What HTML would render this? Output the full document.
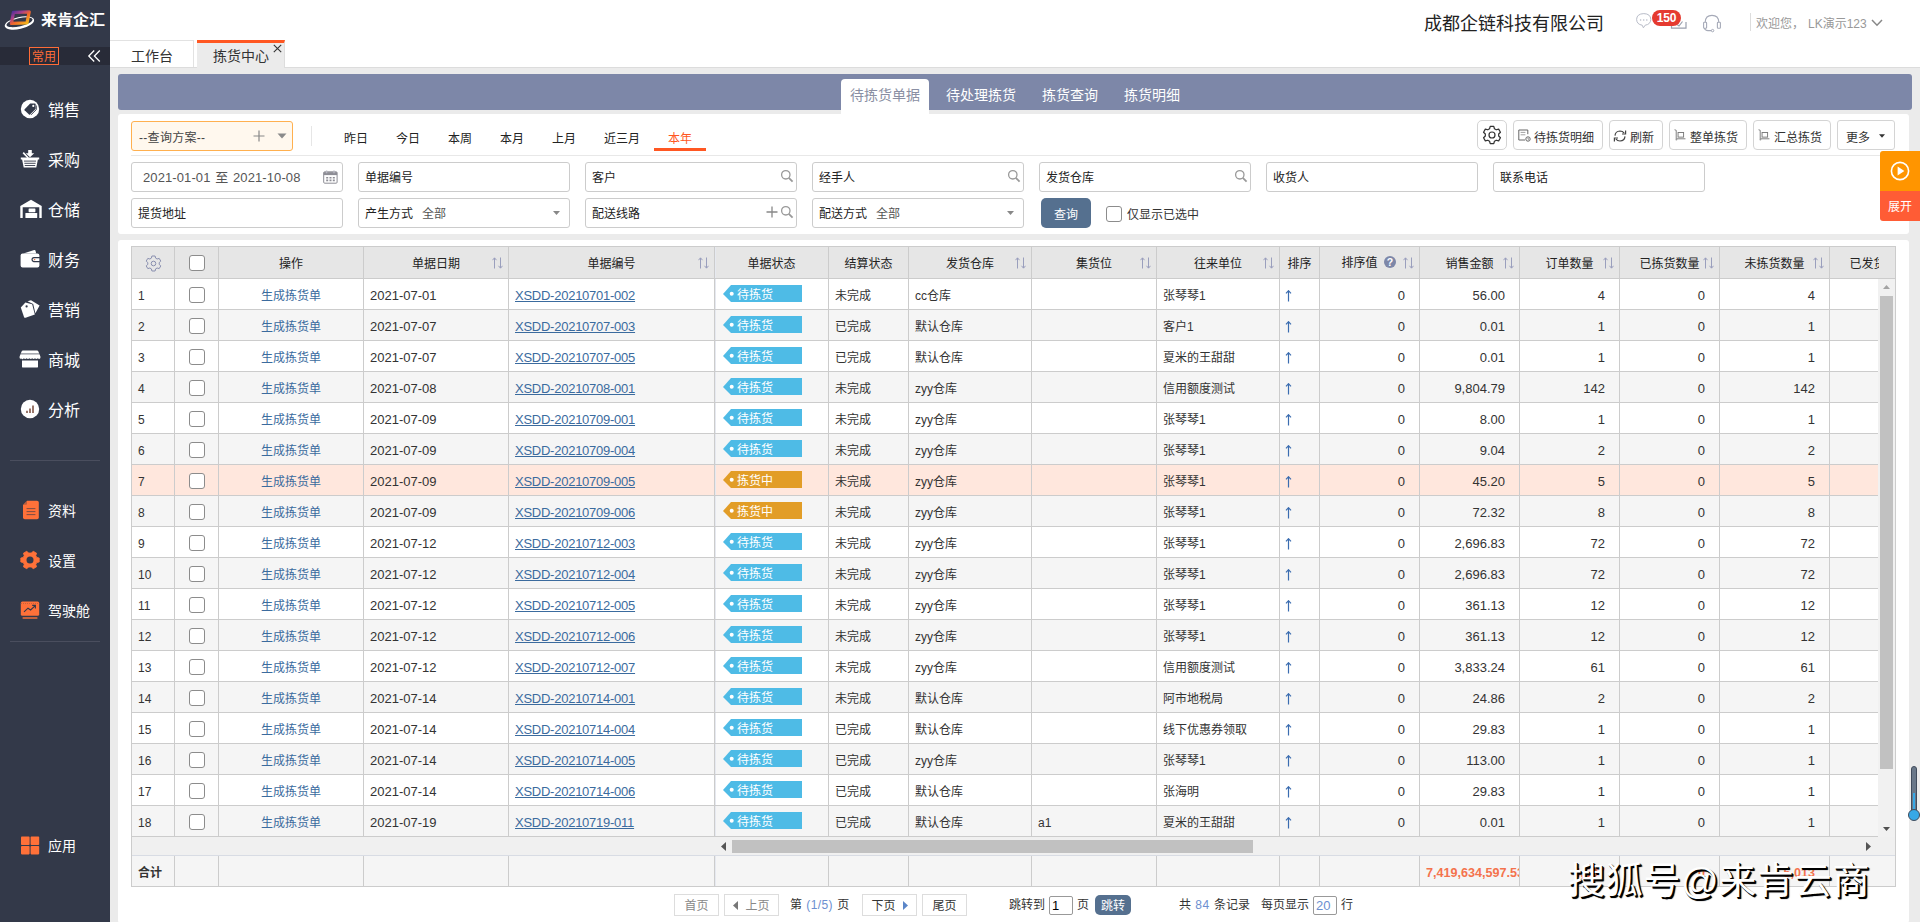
<!DOCTYPE html>
<html lang="zh-CN">
<head>
<meta charset="utf-8">
<title>拣货中心</title>
<style>
*{box-sizing:border-box;margin:0;padding:0}
html,body{width:1920px;height:922px;overflow:hidden;background:#ebebeb;font-family:"Liberation Sans","Noto Sans CJK SC",sans-serif;font-size:12px;color:#333}
body{position:relative}
.abs{position:absolute}
svg{display:block}
/* sidebar */
#side{position:absolute;left:0;top:0;width:110px;height:922px;background:#333949;color:#fff}
#side .band{position:absolute;left:0;top:47px;width:110px;height:18px;background:#282b38}
#side .cy{position:absolute;left:29px;top:47px;width:30px;height:18px;border:1px solid #ff6c37;color:#ff6c37;font-size:12px;line-height:18px;text-align:center;white-space:nowrap;overflow:hidden}
#side .mi{position:absolute;left:48px;font-size:16px;line-height:23px;height:20px;color:#fff;white-space:nowrap}
#side .mi.s{font-size:14px}
#side .ic{position:absolute;left:20px;width:20px;height:20px}
#side .hr{position:absolute;left:10px;width:90px;height:1px;background:#4a4e5e}
/* header */
#head{position:absolute;left:110px;top:0;width:1810px;height:68px;background:#fff;border-bottom:1px solid #dcdcdc}
.tab{position:absolute;top:40px;height:27px;font-size:14px;line-height:31px;color:#333;text-align:center;white-space:nowrap}
.tab1{left:0;width:84px;padding-left:1px;border:1px solid #e2e2e2;border-left:none;border-bottom:none;background:#fff}
.tab2{left:87px;width:88px;height:28px;background:#ebebeb;border-top:3px solid #ff5722;line-height:26px;border-right:1px solid #ddd;text-align:left;padding-left:16px}
.company{position:absolute;left:1314px;top:11px;font-size:18px;line-height:26px;color:#222;white-space:nowrap}
.welcome{position:absolute;top:16px;font-size:12px;line-height:16px;color:#999;white-space:nowrap}
/* purple bar */
#pbar{position:absolute;left:118px;top:74px;width:1794px;height:36px;background:#7d87a8;border-radius:3px}
#pbar .st{position:absolute;top:5px;height:31px;line-height:33px;font-size:14px;color:#fff;white-space:nowrap}
#pbar .st.on{background:#fff;color:#8a8fa3;border-radius:4px 4px 0 0;width:88px;height:36px;text-align:center}
/* panels */
.panel{position:absolute;left:118px;width:1791px;background:#fff;border-radius:3px}
.inp{position:absolute;width:212px;height:30px;border:1px solid #ccc;border-radius:3px;background:#fff;font-size:12px;line-height:30px;padding-left:6px;color:#222;white-space:nowrap;overflow:hidden}
.inp .v{color:#555;margin-left:9px}
.btn{position:absolute;top:120px;height:30px;border:1px solid #d4d4d4;border-radius:4px;background:#fff;font-size:12px;line-height:35px;color:#333;white-space:nowrap;overflow:hidden}
.qd{position:absolute;top:131px;font-size:12px;line-height:16px;color:#222;white-space:nowrap}
/* table */
#grid{position:absolute;left:131px;top:246px;width:1765px;height:641px;border:1px solid #ccc;overflow:hidden;background:#fff}
.row{position:absolute;left:0;height:31px;width:1746px;border-bottom:1px solid #ccc;white-space:nowrap;overflow:hidden;display:flex}
.row.hd{top:0;height:32px;background:#e6e6e6;border-bottom:1px solid #ccc;width:1747px}
.row.ev{background:#f5f5f5}
.row.sel{background:#ffe7dd}
.c{flex:none;height:30px;border-right:1px solid #ccc;line-height:34px;font-size:12px;padding:0 6px;overflow:hidden;white-space:nowrap;position:relative;color:#333}
.hd .c{text-align:center;color:#222;border-right-color:#ccc;padding:0;height:31px;line-height:34px}
.w1{width:43px}.w2{width:44px}.w3{width:145px}.w4{width:145px}.w5{width:206px}.w6{width:114px;box-shadow:inset 1px 0 0 #e6e9f0}.w7{width:80px}.w8{width:123px}.w9{width:125px}.w10{width:123px}.w11{width:40px}.w12{width:100px}.w13{width:100px}.w14{width:100px}.w15{width:100px}.w16{width:110px}.w17{width:100px}
.ctr{text-align:center}
.num{text-align:right;padding-right:14px;font-size:13px}
.dt{font-size:13px}
.lk{color:#3b6b9e}
.lnk{color:#3b6b9e;text-decoration:underline;font-size:13px;letter-spacing:-0.25px}
.cb{position:absolute;left:14px;top:8px;width:16px;height:16px;border:1px solid #8c8c8c;border-radius:3px;background:#fff}
.tag{position:absolute;left:8px;top:6px;width:79px;height:17px;color:#fff;font-size:12px;line-height:20px;overflow:hidden}
.tag svg{position:absolute;left:0;top:0}
.tag span{position:absolute;left:14px;top:0}
.srt{position:absolute;right:5px;top:10px}
.tot{color:#f4734d;font-weight:bold;font-size:12.6px}
.up{color:#3b6b9e}
/* pager */
.pg{position:absolute;top:894px;height:22px;line-height:22px;overflow:hidden;font-size:12px;white-space:nowrap;color:#333}
.pgb{border:1px solid #ddd;text-align:center;background:#fff}
</style>
</head>
<body>
<div id="side">
  <svg class="abs" style="left:0px;top:4px" width="40" height="32" viewBox="0 4 40 32">
    <defs><linearGradient id="lg1" x1="0" y1="0" x2="1" y2="1"><stop offset="0" stop-color="#4b2f9a"/><stop offset="0.3" stop-color="#a8408c"/><stop offset="0.55" stop-color="#f0652e"/><stop offset="0.8" stop-color="#f59a1f"/><stop offset="1" stop-color="#f2c21c"/></linearGradient></defs>
    <g transform="rotate(-13 19.4 23)"><path d="M4.4 23 A15 6 0 1 0 34.4 23 A15 6 0 1 0 4.4 23 Z M6.4 22.3 A13.3 4 0 1 1 33 22.3 A13.3 4 0 1 1 6.4 22.3 Z" fill="#fff" fill-rule="evenodd"/></g>
    <path d="M13.4 12.4 L29.2 11.8 L27 22.8 L11.4 23.4 Z" fill="none" stroke="url(#lg1)" stroke-width="3.3" stroke-linejoin="round"/>
  </svg>
  <div class="abs" style="left:41px;top:9px;font-size:16px;line-height:22px;font-weight:bold;color:#fff;letter-spacing:0;white-space:nowrap;transform:scale(1.0,0.94);transform-origin:left bottom">来肯企汇</div>
  <div class="band"></div>
  <div class="cy">常用</div>
  <svg class="abs" style="left:87px;top:49px" width="16" height="14" viewBox="0 0 16 14"><path d="M7.2 1.5 L1.8 7 L7.2 12.5 M12.8 1.5 L7.4 7 L12.8 12.5" fill="none" stroke="#fff" stroke-width="1.3"/></svg>

  <!-- 销售 -->
  <svg class="ic" style="top:99px" viewBox="0 0 20 20"><circle cx="10" cy="10" r="9.2" fill="#fff"/><path d="M10.2 4.6 L15 4.6 Q15.6 4.6 15.6 5.2 L15.6 10 L10 15.6 Q9.5 16 9 15.6 L4.6 11.2 Q4.2 10.7 4.6 10.2 Z" fill="#333949"/><circle cx="13.3" cy="6.9" r="1.1" fill="#fff"/><path d="M16.3 6.5 L16.3 10.6 L11 15.9" fill="none" stroke="#333949" stroke-width="0.9"/></svg>
  <div class="mi" style="top:99px">销售</div>
  <!-- 采购 -->
  <svg class="ic" style="top:149px" viewBox="0 0 20 20"><path d="M8.2 1 H11.8 V4.2 H14.2 L10 8.2 L5.8 4.2 H8.2 Z" fill="#fff"/><path d="M0.8 8.6 H19.2 V10.6 H17.9 L16.3 18.6 H3.7 L2.1 10.6 H0.8 Z" fill="#fff"/><path d="M4 12.1 H16 M4.4 14.3 H15.6 M4.8 16.5 H15.2" stroke="#333949" stroke-width="0.9"/><path d="M3.2 3.6 L8.2 9" stroke="#fff" stroke-width="1.6"/></svg>
  <div class="mi" style="top:149px">采购</div>
  <!-- 仓储 -->
  <svg class="ic" style="top:199px;width:22px" viewBox="0 0 22 20"><path d="M0.3 7 L11 0.8 L21.7 7 V19 H19.3 V8.2 H2.7 V19 H0.3 Z" fill="#fff"/><rect x="8.6" y="9.4" width="6.8" height="3.8" rx="0.6" fill="#fff"/><rect x="5.4" y="14" width="11.8" height="5" rx="0.6" fill="#fff"/></svg>
  <div class="mi" style="top:199px">仓储</div>
  <!-- 财务 -->
  <svg class="ic" style="top:249px" viewBox="0 0 20 20"><path d="M3.4 4.6 L14.2 1 Q15.2 0.8 15.5 1.8 L16.2 4.6 Z" fill="#fff"/><path d="M2.6 4.4 H17.4 Q19.4 4.4 19.4 6.4 V8 H13.6 Q11.4 8.2 11.4 10.6 Q11.4 13 13.6 13.2 H19.4 V16.6 Q19.4 18.6 17.4 18.6 H2.6 Q0.6 18.6 0.6 16.6 V6.4 Q0.6 4.4 2.6 4.4 Z" fill="#fff"/><path d="M14 9.2 H19.4 V12 H14 Q12.7 11.9 12.7 10.6 Q12.7 9.3 14 9.2 Z" fill="#fff"/><circle cx="14.6" cy="10.6" r="0.8" fill="#e8764a"/></svg>
  <div class="mi" style="top:249px">财务</div>
  <!-- 营销 -->
  <svg class="ic" style="top:299px" viewBox="0 0 20 20"><path d="M7.5 2.2 L11 1.2 L19.6 6.4 L15.4 14.2 L13.2 5 Z" fill="#fff"/><path d="M0.8 8.4 L5.4 3.6 L12.2 5.2 L14.8 15.6 L5.6 18.8 Q4.4 19.1 4 18 Z" fill="#fff"/><circle cx="6.6" cy="7.4" r="1.1" fill="#333949"/></svg>
  <div class="mi" style="top:299px">营销</div>
  <!-- 商城 -->
  <svg class="ic" style="top:349px;left:19px;width:22px" viewBox="0 0 22 20"><path d="M4 1.6 H18 Q19 1.6 19.4 2.6 L21.4 7.4 V9 Q20.4 10.6 18.8 9.3 Q17.4 10.8 16 9.3 Q14.6 10.8 13.2 9.3 Q11.8 10.8 10.4 9.3 Q9 10.8 7.6 9.3 Q6.2 10.8 4.8 9.3 Q3.4 10.8 2.4 9.6 Q1 10.2 0.6 9 V7.4 L2.6 2.6 Q3 1.6 4 1.6 Z" fill="#fff"/><path d="M3 11.6 H19 V17.4 Q19 18.6 17.8 18.6 H4.2 Q3 18.6 3 17.4 Z" fill="#fff"/><path d="M1.4 4.9 H20.6" stroke="#333949" stroke-width="0.7"/></svg>
  <div class="mi" style="top:349px">商城</div>
  <!-- 分析 -->
  <svg class="ic" style="top:399px" viewBox="0 0 20 20"><circle cx="10" cy="10" r="9.2" fill="#fff"/><path d="M7 11.8 V14 M10 9.6 V14 M13 6.6 V14" stroke="#7a4a3a" stroke-width="1.5"/></svg>
  <div class="mi" style="top:399px">分析</div>

  <div class="hr" style="top:460px"></div>
  <!-- 资料 -->
  <svg class="ic" style="top:500px;left:22px;width:18px" viewBox="0 0 18 20"><path d="M5 0.8 H15 Q16.8 0.8 16.8 2.6 V17.4 Q16.8 19.2 15 19.2 H2.8 Q1 19.2 1 17.4 V4.8 Z" fill="#ff7139"/><path d="M1 4.8 L5 0.8 V3.8 Q5 4.8 4 4.8 Z" fill="#333949" opacity="0.35"/><path d="M4.6 8.6 H13.4 M4.6 11.6 H13.4 M4.6 14.6 H13.4" stroke="#333949" stroke-width="0.9" opacity="0.7"/></svg>
  <div class="mi s" style="top:500px">资料</div>
  <!-- 设置 -->
  <svg class="ic" style="top:550px" viewBox="0 0 20 20"><path d="M8 0.8 H12 L12.6 3.2 L14.4 4.2 L16.8 3.4 L18.8 6.8 L17 8.6 V11.4 L18.8 13.2 L16.8 16.6 L14.4 15.8 L12.6 16.8 L12 19.2 H8 L7.4 16.8 L5.6 15.8 L3.2 16.6 L1.2 13.2 L3 11.4 V8.6 L1.2 6.8 L3.2 3.4 L5.6 4.2 L7.4 3.2 Z" fill="#ff7139" stroke="#ff7139" stroke-width="0.8" stroke-linejoin="round" transform="rotate(90 10 10)"/><circle cx="10" cy="10" r="3.5" fill="#333949"/></svg>
  <div class="mi s" style="top:550px">设置</div>
  <!-- 驾驶舱 -->
  <svg class="ic" style="top:600px" viewBox="0 0 20 20"><rect x="0.8" y="1.6" width="18.4" height="14.2" rx="1.6" fill="#ff7139"/><path d="M2.6 18 H17.4" stroke="#ff7139" stroke-width="1.4"/><path d="M4 11.8 L8 8.2 L10.6 10 L15 5.8 M12.2 5.4 H15.4 V8.6" fill="none" stroke="#333949" stroke-width="1.1"/><path d="M1 3.4 H19" stroke="#333949" stroke-width="0.5" stroke-dasharray="1 1" opacity="0.6"/></svg>
  <div class="mi s" style="top:600px">驾驶舱</div>
  <div class="hr" style="top:641px"></div>
  <!-- 应用 -->
  <svg class="ic" style="top:835px" viewBox="0 0 20 20"><rect x="1" y="1.6" width="8.6" height="8.4" rx="0.8" fill="#ff7139"/><rect x="10.6" y="1.6" width="8.6" height="8.4" rx="0.8" fill="#ff7139"/><rect x="1" y="11" width="8.6" height="8.4" rx="0.8" fill="#ff7139"/><rect x="10.6" y="11" width="8.6" height="8.4" rx="0.8" fill="#ff7139"/></svg>
  <div class="mi s" style="top:835px">应用</div>
</div>
<div id="head">
  <div class="tab tab1">工作台</div>
  <div class="tab tab2">拣货中心</div>
  <svg class="abs" style="left:163px;top:44px" width="9" height="9" viewBox="0 0 9 9"><path d="M0.8 0.8 L8.2 8.2 M8.2 0.8 L0.8 8.2" stroke="#333" stroke-width="1.1"/></svg>
  <div class="company">成都企链科技有限公司</div>
  <!-- chat -->
  <svg class="abs" style="left:1525px;top:12px" width="18" height="18" viewBox="0 0 18 18"><path d="M8.8 1.6 Q15.6 1.8 15.8 7.4 Q15.6 12.4 10.2 13.2 L8.4 15.8 L7.2 13.2 Q1.8 12.4 1.6 7.4 Q1.8 1.8 8.8 1.6 Z" fill="none" stroke="#b8bcc8" stroke-width="1"/><circle cx="5.6" cy="8" r="0.8" fill="#b8bcc8"/><circle cx="8.7" cy="8" r="0.8" fill="#b8bcc8"/><circle cx="11.8" cy="8" r="0.8" fill="#b8bcc8"/></svg>
  <!-- tray -->
  <svg class="abs" style="left:1560px;top:14px" width="18" height="16" viewBox="0 0 18 16"><path d="M1.5 8 V14.2 H16 V8" fill="none" stroke="#9aa0ae" stroke-width="1.2"/><path d="M7 10.5 L9 12 L12.5 7.5" fill="none" stroke="#9aa0ae" stroke-width="1.2"/></svg>
  <div class="abs" style="left:1542px;top:10px;width:29px;height:16px;border-radius:8px;background:#e53a30;color:#fff;font-size:12px;font-weight:bold;line-height:17px;text-align:center;letter-spacing:-0.2px">150</div>
  <!-- headset -->
  <svg class="abs" style="left:1592px;top:14px" width="20" height="19" viewBox="0 0 20 19"><path d="M3.2 8.2 Q3.4 1.4 10 1.4 Q16.6 1.4 16.8 8.2" fill="none" stroke="#a6aab8" stroke-width="1.1"/><rect x="1.6" y="8.2" width="3" height="6" rx="0.8" fill="none" stroke="#a6aab8" stroke-width="1.1"/><rect x="15.4" y="8.2" width="3" height="6" rx="0.8" fill="none" stroke="#a6aab8" stroke-width="1.1"/><path d="M2.4 14.2 Q3 16.6 6 16.6 H9.4" fill="none" stroke="#a6aab8" stroke-width="1.1"/><circle cx="10.6" cy="16.6" r="1.2" fill="none" stroke="#a6aab8" stroke-width="1"/></svg>
  <div class="abs" style="left:1640px;top:13px;width:1px;height:18px;background:#ddd"></div>
  <div class="welcome" style="left:1646px">欢迎您，</div>
  <div class="welcome" style="left:1698px">LK演示123</div>
  <svg class="abs" style="left:1761px;top:19px" width="12" height="8" viewBox="0 0 12 8"><path d="M1 1 L6 6.2 L11 1" fill="none" stroke="#888" stroke-width="1.5"/></svg>
</div>

<div id="pbar">
  <div class="st on" style="left:723px">待拣货单据</div>
  <div class="st" style="left:828px">待处理拣货</div>
  <div class="st" style="left:924px">拣货查询</div>
  <div class="st" style="left:1006px">拣货明细</div>
</div>
<div class="panel" style="top:114px;height:120px"></div>
<!-- query scheme -->
<div class="abs" style="left:131px;top:121px;width:162px;height:30px;border:1px solid #ffb04f;border-radius:3px;background:#fff8ee;font-size:12px;line-height:33px;letter-spacing:0.3px;overflow:hidden;padding-left:7px;color:#444;white-space:nowrap">--查询方案--</div>
<svg class="abs" style="left:253px;top:130px" width="12" height="12" viewBox="0 0 12 12"><path d="M6 0.5 V11.5 M0.5 6 H11.5" stroke="#888" stroke-width="1.2"/></svg>
<svg class="abs" style="left:277px;top:133px" width="10" height="6" viewBox="0 0 10 6"><path d="M0.5 0.5 H9.5 L5 5.5 Z" fill="#8a8a8a"/></svg>
<div class="abs" style="left:311px;top:126px;width:1px;height:20px;background:#e6e6e6"></div>
<div class="qd" style="left:344px">昨日</div>
<div class="qd" style="left:396px">今日</div>
<div class="qd" style="left:448px">本周</div>
<div class="qd" style="left:500px">本月</div>
<div class="qd" style="left:552px">上月</div>
<div class="qd" style="left:604px">近三月</div>
<div class="qd" style="left:668px;color:#ff5722">本年</div>
<div class="abs" style="left:654px;top:148px;width:52px;height:3px;background:#ff5722"></div>
<div class="abs" style="left:131px;top:155px;width:1764px;height:1px;background:#e8e8e8"></div>

<!-- toolbar buttons -->
<div class="btn" style="left:1477px;width:30px;border-radius:5px"></div>
<svg class="abs" style="left:1482px;top:125px" width="20" height="20" viewBox="0 0 18 18"><path d="M7.4 1.2 H10.6 L11.2 3.4 L12.8 4.3 L15 3.7 L16.6 6.5 L15 8.1 V9.9 L16.6 11.5 L15 14.3 L12.8 13.7 L11.2 14.6 L10.6 16.8 H7.4 L6.8 14.6 L5.2 13.7 L3 14.3 L1.4 11.5 L3 9.9 V8.1 L1.4 6.5 L3 3.7 L5.2 4.3 L6.8 3.4 Z" fill="none" stroke="#333" stroke-width="1.1" stroke-linejoin="round"/><circle cx="9" cy="9" r="2.7" fill="none" stroke="#333" stroke-width="1.1"/></svg>
<div class="btn" style="left:1513px;width:90px;padding-left:20px">待拣货明细</div>
<svg class="abs" style="left:1518px;top:129px" width="13" height="13" viewBox="0 0 13 13"><path d="M9.8 5.2 V1 H0.8 V11 H7" fill="none" stroke="#666" stroke-width="1"/><path d="M2.6 3.4 H7.4 M2.6 5.8 H7.4" stroke="#999" stroke-width="0.9"/><circle cx="10" cy="10" r="2.2" fill="none" stroke="#666" stroke-width="1"/><path d="M10 8.8 V10.2 H11" stroke="#666" stroke-width="0.7" fill="none"/></svg>
<div class="btn" style="left:1609px;width:54px;padding-left:20px">刷新</div>
<svg class="abs" style="left:1613px;top:129px" width="14" height="14" viewBox="0 0 14 14"><path d="M2 6.6 Q2.4 2.2 7 2 Q9.6 2 11.2 4.2" fill="none" stroke="#444" stroke-width="1.2"/><path d="M12.6 1.4 V5 H9" fill="none" stroke="#444" stroke-width="1.2"/><path d="M12 7.4 Q11.6 11.8 7 12 Q4.4 12 2.8 9.8" fill="none" stroke="#444" stroke-width="1.2"/><path d="M1.4 12.6 V9 H5" fill="none" stroke="#444" stroke-width="1.2"/></svg>
<div class="btn" style="left:1669px;width:78px;padding-left:20px">整单拣货</div>
<svg class="abs" style="left:1674px;top:129px" width="12" height="12" viewBox="0 0 13 13"><path d="M0.6 0.8 L2.4 1.4 V10.6 H12.4" fill="none" stroke="#777" stroke-width="1"/><rect x="4.4" y="3.8" width="6" height="5" fill="none" stroke="#777" stroke-width="1"/><circle cx="2.6" cy="11.4" r="1" fill="#999"/></svg>
<div class="btn" style="left:1753px;width:78px;padding-left:20px">汇总拣货</div>
<svg class="abs" style="left:1758px;top:129px" width="12" height="12" viewBox="0 0 13 13"><path d="M0.6 0.8 L2.4 1.4 V10.6 H12.4" fill="none" stroke="#777" stroke-width="1"/><rect x="4.4" y="3.8" width="6" height="5" fill="none" stroke="#777" stroke-width="1"/><circle cx="2.6" cy="11.4" r="1" fill="#999"/></svg>
<div class="btn" style="left:1837px;width:58px;padding-left:8px;border-radius:3px">更多</div>
<svg class="abs" style="left:1879px;top:134px" width="6" height="4" viewBox="0 0 7 4"><path d="M0 0 H7 L3.5 4 Z" fill="#333"/></svg>

<!-- row 1 inputs -->
<div class="inp" style="left:131px;top:162px;padding-left:11px;color:#555;font-size:13px;word-spacing:1px;letter-spacing:0.1px">2021-01-01 至 2021-10-08</div>
<svg class="abs" style="left:323px;top:170px" width="15" height="14" viewBox="0 0 15 14"><rect x="0.7" y="1.8" width="13.4" height="11.4" rx="1" fill="none" stroke="#8d8d95" stroke-width="1"/><path d="M0.7 3.6 H14.1" stroke="#8d8d95" stroke-width="3"/><path d="M3.6 0.4 V3.2 M11 0.4 V3.2" stroke="#b9b9c4" stroke-width="1.4"/><path d="M3.2 7.8 H5.2 M6.5 7.8 H8.5 M9.8 7.8 H11.8 M3.2 10.4 H5.2 M6.5 10.4 H8.5 M9.8 10.4 H11.8" stroke="#8d8d95" stroke-width="1.6"/></svg>
<div class="inp" style="left:358px;top:162px">单据编号</div>
<div class="inp" style="left:585px;top:162px">客户</div>
<div class="inp" style="left:812px;top:162px">经手人</div>
<div class="inp" style="left:1039px;top:162px">发货仓库</div>
<div class="inp" style="left:1266px;top:162px">收货人</div>
<div class="inp" style="left:1493px;top:162px">联系电话</div>
<svg class="abs sr" style="left:780px;top:169px" width="14" height="14" viewBox="0 0 14 14"><circle cx="5.8" cy="5.8" r="4.2" fill="none" stroke="#999" stroke-width="1.3"/><path d="M8.8 8.8 L12.6 12.6" stroke="#999" stroke-width="1.8"/></svg>
<svg class="abs sr" style="left:1007px;top:169px" width="14" height="14" viewBox="0 0 14 14"><circle cx="5.8" cy="5.8" r="4.2" fill="none" stroke="#999" stroke-width="1.3"/><path d="M8.8 8.8 L12.6 12.6" stroke="#999" stroke-width="1.8"/></svg>
<svg class="abs sr" style="left:1234px;top:169px" width="14" height="14" viewBox="0 0 14 14"><circle cx="5.8" cy="5.8" r="4.2" fill="none" stroke="#999" stroke-width="1.3"/><path d="M8.8 8.8 L12.6 12.6" stroke="#999" stroke-width="1.8"/></svg>
<!-- row 2 inputs -->
<div class="inp" style="left:131px;top:198px">提货地址</div>
<div class="inp" style="left:358px;top:198px">产生方式<span class="v">全部</span></div>
<svg class="abs" style="left:553px;top:211px" width="7" height="4" viewBox="0 0 7 4"><path d="M0 0 H7 L3.5 4 Z" fill="#888"/></svg>
<div class="inp" style="left:585px;top:198px">配送线路</div>
<svg class="abs" style="left:766px;top:206px" width="12" height="12" viewBox="0 0 12 12"><path d="M6 0.5 V11.5 M0.5 6 H11.5" stroke="#888" stroke-width="1.3"/></svg>
<svg class="abs sr" style="left:780px;top:205px" width="14" height="14" viewBox="0 0 14 14"><circle cx="5.8" cy="5.8" r="4.2" fill="none" stroke="#999" stroke-width="1.3"/><path d="M8.8 8.8 L12.6 12.6" stroke="#999" stroke-width="1.8"/></svg>
<div class="inp" style="left:812px;top:198px">配送方式<span class="v">全部</span></div>
<svg class="abs" style="left:1007px;top:211px" width="7" height="4" viewBox="0 0 7 4"><path d="M0 0 H7 L3.5 4 Z" fill="#888"/></svg>
<div class="abs" style="left:1041px;top:198px;width:50px;height:30px;border-radius:5px;background:#55708f;color:#fff;font-size:12px;line-height:34px;overflow:hidden;text-align:center">查询</div>
<div class="abs" style="left:1106px;top:206px;width:16px;height:16px;border:1px solid #8c8c8c;border-radius:3px;background:#fff"></div>
<div class="abs" style="left:1127px;top:206px;font-size:12px;line-height:19px;color:#333;white-space:nowrap">仅显示已选中</div>

<!-- float button -->
<div class="abs" style="left:1880px;top:151px;width:40px;height:40px;background:#ff9500;border-radius:3px 0 0 0"></div>
<svg class="abs" style="left:1890px;top:161px" width="20" height="20" viewBox="0 0 20 20"><circle cx="10" cy="10" r="8.6" fill="none" stroke="#fff" stroke-width="1.6"/><path d="M7.6 5.6 L14.4 10 L7.6 14.4 Z" fill="#fff"/></svg>
<div class="abs" style="left:1880px;top:191px;width:40px;height:30px;background:#ff5c35;border-radius:0 0 0 3px;color:#fff;font-size:12px;line-height:33px;overflow:hidden;text-align:center">展开</div>
<div class="panel" style="top:240px;height:683px"></div>
<div id="grid">
<div class="abs" style="left:0;top:0;width:1763px;height:32px;background:#e6e6e6;border-bottom:1px solid #ccc"></div>
<div class="row hd">
<div class="c w1"><svg class="abs" style="left:13px;top:8px" width="17" height="17" viewBox="0 0 17 17"><path d="M6.9 1 H10.1 L10.6 3.1 L12.1 4 L14.2 3.4 L15.8 6.1 L14.2 7.6 V9.4 L15.8 10.9 L14.2 13.6 L12.1 13 L10.6 13.9 L10.1 16 H6.9 L6.4 13.9 L4.9 13 L2.8 13.6 L1.2 10.9 L2.8 9.4 V7.6 L1.2 6.1 L2.8 3.4 L4.9 4 L6.4 3.1 Z" fill="none" stroke="#8a90b0" stroke-width="1" stroke-linejoin="round"/><circle cx="8.5" cy="8.5" r="2.3" fill="none" stroke="#8a90b0" stroke-width="1"/></svg></div>
<div class="c w2"><i class="cb" style="left:14px;top:8px"></i></div>
<div class="c w3">操作</div>
<div class="c w4">单据日期<svg class="srt" width="11" height="12" viewBox="0 0 11 12"><path d="M2.5 11.5 V1 M0.5 3.2 L2.5 0.8 L4.5 3.2 M8.5 0.5 V11 M6.5 8.8 L8.5 11.2 L10.5 8.8" fill="none" stroke="#9a9fbd" stroke-width="1"/></svg></div>
<div class="c w5">单据编号<svg class="srt" width="11" height="12" viewBox="0 0 11 12"><path d="M2.5 11.5 V1 M0.5 3.2 L2.5 0.8 L4.5 3.2 M8.5 0.5 V11 M6.5 8.8 L8.5 11.2 L10.5 8.8" fill="none" stroke="#9a9fbd" stroke-width="1"/></svg></div>
<div class="c w6">单据状态</div>
<div class="c w7">结算状态</div>
<div class="c w8">发货仓库<svg class="srt" width="11" height="12" viewBox="0 0 11 12"><path d="M2.5 11.5 V1 M0.5 3.2 L2.5 0.8 L4.5 3.2 M8.5 0.5 V11 M6.5 8.8 L8.5 11.2 L10.5 8.8" fill="none" stroke="#9a9fbd" stroke-width="1"/></svg></div>
<div class="c w9">集货位<svg class="srt" width="11" height="12" viewBox="0 0 11 12"><path d="M2.5 11.5 V1 M0.5 3.2 L2.5 0.8 L4.5 3.2 M8.5 0.5 V11 M6.5 8.8 L8.5 11.2 L10.5 8.8" fill="none" stroke="#9a9fbd" stroke-width="1"/></svg></div>
<div class="c w10">往来单位<svg class="srt" width="11" height="12" viewBox="0 0 11 12"><path d="M2.5 11.5 V1 M0.5 3.2 L2.5 0.8 L4.5 3.2 M8.5 0.5 V11 M6.5 8.8 L8.5 11.2 L10.5 8.8" fill="none" stroke="#9a9fbd" stroke-width="1"/></svg></div>
<div class="c w11">排序</div>
<div class="c w12"><span style="position:relative;left:-10px;top:-1px">排序值</span><svg class="abs" style="left:64px;top:9px" width="12" height="12" viewBox="0 0 12 12"><circle cx="6" cy="6" r="6" fill="#7d87a8"/><text x="6" y="9.8" font-size="10.5" font-weight="bold" text-anchor="middle" fill="#fff" font-family="Liberation Sans,sans-serif">?</text></svg><svg class="srt" width="11" height="12" viewBox="0 0 11 12"><path d="M2.5 11.5 V1 M0.5 3.2 L2.5 0.8 L4.5 3.2 M8.5 0.5 V11 M6.5 8.8 L8.5 11.2 L10.5 8.8" fill="none" stroke="#9a9fbd" stroke-width="1"/></svg></div>
<div class="c w13">销售金额<svg class="srt" width="11" height="12" viewBox="0 0 11 12"><path d="M2.5 11.5 V1 M0.5 3.2 L2.5 0.8 L4.5 3.2 M8.5 0.5 V11 M6.5 8.8 L8.5 11.2 L10.5 8.8" fill="none" stroke="#9a9fbd" stroke-width="1"/></svg></div>
<div class="c w14">订单数量<svg class="srt" width="11" height="12" viewBox="0 0 11 12"><path d="M2.5 11.5 V1 M0.5 3.2 L2.5 0.8 L4.5 3.2 M8.5 0.5 V11 M6.5 8.8 L8.5 11.2 L10.5 8.8" fill="none" stroke="#9a9fbd" stroke-width="1"/></svg></div>
<div class="c w15">已拣货数量<svg class="srt" width="11" height="12" viewBox="0 0 11 12"><path d="M2.5 11.5 V1 M0.5 3.2 L2.5 0.8 L4.5 3.2 M8.5 0.5 V11 M6.5 8.8 L8.5 11.2 L10.5 8.8" fill="none" stroke="#9a9fbd" stroke-width="1"/></svg></div>
<div class="c w16">未拣货数量<svg class="srt" width="11" height="12" viewBox="0 0 11 12"><path d="M2.5 11.5 V1 M0.5 3.2 L2.5 0.8 L4.5 3.2 M8.5 0.5 V11 M6.5 8.8 L8.5 11.2 L10.5 8.8" fill="none" stroke="#9a9fbd" stroke-width="1"/></svg></div>
<div class="c w17">已发货数量</div>
</div>
<div class="row" style="top:32px">
<div class="c w1">1</div><div class="c w2"><i class="cb"></i></div><div class="c w3 ctr lk">生成拣货单</div>
<div class="c w4 dt">2021-07-01</div><div class="c w5 lnk">XSDD-20210701-002</div><div class="c w6"><div class="tag"><svg width="79" height="17" viewBox="0 0 79 17"><path d="M8 0 H79 V17 H8 L0 9 Z" fill="#4ebbe6"/><circle cx="8.7" cy="8.7" r="2" fill="#fff"/></svg><span>待拣货</span></div></div>
<div class="c w7">未完成</div><div class="c w8">cc仓库</div><div class="c w9"></div><div class="c w10">张琴琴1</div>
<div class="c w11"><svg class="abs" style="left:5px;top:11px" width="7" height="12" viewBox="0 0 7 12"><path d="M3.5 11.5 V1 M1 3.3 L3.5 0.7 L6 3.3" fill="none" stroke="#3a6cb0" stroke-width="1.2"/></svg></div><div class="c w12 num">0</div><div class="c w13 num">56.00</div><div class="c w14 num">4</div><div class="c w15 num">0</div><div class="c w16 num">4</div><div class="c w17 num"></div>
</div>
<div class="row ev" style="top:63px">
<div class="c w1">2</div><div class="c w2"><i class="cb"></i></div><div class="c w3 ctr lk">生成拣货单</div>
<div class="c w4 dt">2021-07-07</div><div class="c w5 lnk">XSDD-20210707-003</div><div class="c w6"><div class="tag"><svg width="79" height="17" viewBox="0 0 79 17"><path d="M8 0 H79 V17 H8 L0 9 Z" fill="#4ebbe6"/><circle cx="8.7" cy="8.7" r="2" fill="#fff"/></svg><span>待拣货</span></div></div>
<div class="c w7">已完成</div><div class="c w8">默认仓库</div><div class="c w9"></div><div class="c w10">客户1</div>
<div class="c w11"><svg class="abs" style="left:5px;top:11px" width="7" height="12" viewBox="0 0 7 12"><path d="M3.5 11.5 V1 M1 3.3 L3.5 0.7 L6 3.3" fill="none" stroke="#3a6cb0" stroke-width="1.2"/></svg></div><div class="c w12 num">0</div><div class="c w13 num">0.01</div><div class="c w14 num">1</div><div class="c w15 num">0</div><div class="c w16 num">1</div><div class="c w17 num"></div>
</div>
<div class="row" style="top:94px">
<div class="c w1">3</div><div class="c w2"><i class="cb"></i></div><div class="c w3 ctr lk">生成拣货单</div>
<div class="c w4 dt">2021-07-07</div><div class="c w5 lnk">XSDD-20210707-005</div><div class="c w6"><div class="tag"><svg width="79" height="17" viewBox="0 0 79 17"><path d="M8 0 H79 V17 H8 L0 9 Z" fill="#4ebbe6"/><circle cx="8.7" cy="8.7" r="2" fill="#fff"/></svg><span>待拣货</span></div></div>
<div class="c w7">已完成</div><div class="c w8">默认仓库</div><div class="c w9"></div><div class="c w10">夏米的王甜甜</div>
<div class="c w11"><svg class="abs" style="left:5px;top:11px" width="7" height="12" viewBox="0 0 7 12"><path d="M3.5 11.5 V1 M1 3.3 L3.5 0.7 L6 3.3" fill="none" stroke="#3a6cb0" stroke-width="1.2"/></svg></div><div class="c w12 num">0</div><div class="c w13 num">0.01</div><div class="c w14 num">1</div><div class="c w15 num">0</div><div class="c w16 num">1</div><div class="c w17 num"></div>
</div>
<div class="row ev" style="top:125px">
<div class="c w1">4</div><div class="c w2"><i class="cb"></i></div><div class="c w3 ctr lk">生成拣货单</div>
<div class="c w4 dt">2021-07-08</div><div class="c w5 lnk">XSDD-20210708-001</div><div class="c w6"><div class="tag"><svg width="79" height="17" viewBox="0 0 79 17"><path d="M8 0 H79 V17 H8 L0 9 Z" fill="#4ebbe6"/><circle cx="8.7" cy="8.7" r="2" fill="#fff"/></svg><span>待拣货</span></div></div>
<div class="c w7">未完成</div><div class="c w8">zyy仓库</div><div class="c w9"></div><div class="c w10">信用额度测试</div>
<div class="c w11"><svg class="abs" style="left:5px;top:11px" width="7" height="12" viewBox="0 0 7 12"><path d="M3.5 11.5 V1 M1 3.3 L3.5 0.7 L6 3.3" fill="none" stroke="#3a6cb0" stroke-width="1.2"/></svg></div><div class="c w12 num">0</div><div class="c w13 num">9,804.79</div><div class="c w14 num">142</div><div class="c w15 num">0</div><div class="c w16 num">142</div><div class="c w17 num"></div>
</div>
<div class="row" style="top:156px">
<div class="c w1">5</div><div class="c w2"><i class="cb"></i></div><div class="c w3 ctr lk">生成拣货单</div>
<div class="c w4 dt">2021-07-09</div><div class="c w5 lnk">XSDD-20210709-001</div><div class="c w6"><div class="tag"><svg width="79" height="17" viewBox="0 0 79 17"><path d="M8 0 H79 V17 H8 L0 9 Z" fill="#4ebbe6"/><circle cx="8.7" cy="8.7" r="2" fill="#fff"/></svg><span>待拣货</span></div></div>
<div class="c w7">未完成</div><div class="c w8">zyy仓库</div><div class="c w9"></div><div class="c w10">张琴琴1</div>
<div class="c w11"><svg class="abs" style="left:5px;top:11px" width="7" height="12" viewBox="0 0 7 12"><path d="M3.5 11.5 V1 M1 3.3 L3.5 0.7 L6 3.3" fill="none" stroke="#3a6cb0" stroke-width="1.2"/></svg></div><div class="c w12 num">0</div><div class="c w13 num">8.00</div><div class="c w14 num">1</div><div class="c w15 num">0</div><div class="c w16 num">1</div><div class="c w17 num"></div>
</div>
<div class="row ev" style="top:187px">
<div class="c w1">6</div><div class="c w2"><i class="cb"></i></div><div class="c w3 ctr lk">生成拣货单</div>
<div class="c w4 dt">2021-07-09</div><div class="c w5 lnk">XSDD-20210709-004</div><div class="c w6"><div class="tag"><svg width="79" height="17" viewBox="0 0 79 17"><path d="M8 0 H79 V17 H8 L0 9 Z" fill="#4ebbe6"/><circle cx="8.7" cy="8.7" r="2" fill="#fff"/></svg><span>待拣货</span></div></div>
<div class="c w7">未完成</div><div class="c w8">zyy仓库</div><div class="c w9"></div><div class="c w10">张琴琴1</div>
<div class="c w11"><svg class="abs" style="left:5px;top:11px" width="7" height="12" viewBox="0 0 7 12"><path d="M3.5 11.5 V1 M1 3.3 L3.5 0.7 L6 3.3" fill="none" stroke="#3a6cb0" stroke-width="1.2"/></svg></div><div class="c w12 num">0</div><div class="c w13 num">9.04</div><div class="c w14 num">2</div><div class="c w15 num">0</div><div class="c w16 num">2</div><div class="c w17 num"></div>
</div>
<div class="row sel" style="top:218px">
<div class="c w1">7</div><div class="c w2"><i class="cb"></i></div><div class="c w3 ctr lk">生成拣货单</div>
<div class="c w4 dt">2021-07-09</div><div class="c w5 lnk">XSDD-20210709-005</div><div class="c w6"><div class="tag"><svg width="79" height="17" viewBox="0 0 79 17"><path d="M8 0 H79 V17 H8 L0 9 Z" fill="#e29d27"/><circle cx="8.7" cy="8.7" r="2" fill="#fff"/></svg><span>拣货中</span></div></div>
<div class="c w7">未完成</div><div class="c w8">zyy仓库</div><div class="c w9"></div><div class="c w10">张琴琴1</div>
<div class="c w11"><svg class="abs" style="left:5px;top:11px" width="7" height="12" viewBox="0 0 7 12"><path d="M3.5 11.5 V1 M1 3.3 L3.5 0.7 L6 3.3" fill="none" stroke="#3a6cb0" stroke-width="1.2"/></svg></div><div class="c w12 num">0</div><div class="c w13 num">45.20</div><div class="c w14 num">5</div><div class="c w15 num">0</div><div class="c w16 num">5</div><div class="c w17 num"></div>
</div>
<div class="row ev" style="top:249px">
<div class="c w1">8</div><div class="c w2"><i class="cb"></i></div><div class="c w3 ctr lk">生成拣货单</div>
<div class="c w4 dt">2021-07-09</div><div class="c w5 lnk">XSDD-20210709-006</div><div class="c w6"><div class="tag"><svg width="79" height="17" viewBox="0 0 79 17"><path d="M8 0 H79 V17 H8 L0 9 Z" fill="#e29d27"/><circle cx="8.7" cy="8.7" r="2" fill="#fff"/></svg><span>拣货中</span></div></div>
<div class="c w7">未完成</div><div class="c w8">zyy仓库</div><div class="c w9"></div><div class="c w10">张琴琴1</div>
<div class="c w11"><svg class="abs" style="left:5px;top:11px" width="7" height="12" viewBox="0 0 7 12"><path d="M3.5 11.5 V1 M1 3.3 L3.5 0.7 L6 3.3" fill="none" stroke="#3a6cb0" stroke-width="1.2"/></svg></div><div class="c w12 num">0</div><div class="c w13 num">72.32</div><div class="c w14 num">8</div><div class="c w15 num">0</div><div class="c w16 num">8</div><div class="c w17 num"></div>
</div>
<div class="row" style="top:280px">
<div class="c w1">9</div><div class="c w2"><i class="cb"></i></div><div class="c w3 ctr lk">生成拣货单</div>
<div class="c w4 dt">2021-07-12</div><div class="c w5 lnk">XSDD-20210712-003</div><div class="c w6"><div class="tag"><svg width="79" height="17" viewBox="0 0 79 17"><path d="M8 0 H79 V17 H8 L0 9 Z" fill="#4ebbe6"/><circle cx="8.7" cy="8.7" r="2" fill="#fff"/></svg><span>待拣货</span></div></div>
<div class="c w7">未完成</div><div class="c w8">zyy仓库</div><div class="c w9"></div><div class="c w10">张琴琴1</div>
<div class="c w11"><svg class="abs" style="left:5px;top:11px" width="7" height="12" viewBox="0 0 7 12"><path d="M3.5 11.5 V1 M1 3.3 L3.5 0.7 L6 3.3" fill="none" stroke="#3a6cb0" stroke-width="1.2"/></svg></div><div class="c w12 num">0</div><div class="c w13 num">2,696.83</div><div class="c w14 num">72</div><div class="c w15 num">0</div><div class="c w16 num">72</div><div class="c w17 num"></div>
</div>
<div class="row ev" style="top:311px">
<div class="c w1">10</div><div class="c w2"><i class="cb"></i></div><div class="c w3 ctr lk">生成拣货单</div>
<div class="c w4 dt">2021-07-12</div><div class="c w5 lnk">XSDD-20210712-004</div><div class="c w6"><div class="tag"><svg width="79" height="17" viewBox="0 0 79 17"><path d="M8 0 H79 V17 H8 L0 9 Z" fill="#4ebbe6"/><circle cx="8.7" cy="8.7" r="2" fill="#fff"/></svg><span>待拣货</span></div></div>
<div class="c w7">未完成</div><div class="c w8">zyy仓库</div><div class="c w9"></div><div class="c w10">张琴琴1</div>
<div class="c w11"><svg class="abs" style="left:5px;top:11px" width="7" height="12" viewBox="0 0 7 12"><path d="M3.5 11.5 V1 M1 3.3 L3.5 0.7 L6 3.3" fill="none" stroke="#3a6cb0" stroke-width="1.2"/></svg></div><div class="c w12 num">0</div><div class="c w13 num">2,696.83</div><div class="c w14 num">72</div><div class="c w15 num">0</div><div class="c w16 num">72</div><div class="c w17 num"></div>
</div>
<div class="row" style="top:342px">
<div class="c w1">11</div><div class="c w2"><i class="cb"></i></div><div class="c w3 ctr lk">生成拣货单</div>
<div class="c w4 dt">2021-07-12</div><div class="c w5 lnk">XSDD-20210712-005</div><div class="c w6"><div class="tag"><svg width="79" height="17" viewBox="0 0 79 17"><path d="M8 0 H79 V17 H8 L0 9 Z" fill="#4ebbe6"/><circle cx="8.7" cy="8.7" r="2" fill="#fff"/></svg><span>待拣货</span></div></div>
<div class="c w7">未完成</div><div class="c w8">zyy仓库</div><div class="c w9"></div><div class="c w10">张琴琴1</div>
<div class="c w11"><svg class="abs" style="left:5px;top:11px" width="7" height="12" viewBox="0 0 7 12"><path d="M3.5 11.5 V1 M1 3.3 L3.5 0.7 L6 3.3" fill="none" stroke="#3a6cb0" stroke-width="1.2"/></svg></div><div class="c w12 num">0</div><div class="c w13 num">361.13</div><div class="c w14 num">12</div><div class="c w15 num">0</div><div class="c w16 num">12</div><div class="c w17 num"></div>
</div>
<div class="row ev" style="top:373px">
<div class="c w1">12</div><div class="c w2"><i class="cb"></i></div><div class="c w3 ctr lk">生成拣货单</div>
<div class="c w4 dt">2021-07-12</div><div class="c w5 lnk">XSDD-20210712-006</div><div class="c w6"><div class="tag"><svg width="79" height="17" viewBox="0 0 79 17"><path d="M8 0 H79 V17 H8 L0 9 Z" fill="#4ebbe6"/><circle cx="8.7" cy="8.7" r="2" fill="#fff"/></svg><span>待拣货</span></div></div>
<div class="c w7">未完成</div><div class="c w8">zyy仓库</div><div class="c w9"></div><div class="c w10">张琴琴1</div>
<div class="c w11"><svg class="abs" style="left:5px;top:11px" width="7" height="12" viewBox="0 0 7 12"><path d="M3.5 11.5 V1 M1 3.3 L3.5 0.7 L6 3.3" fill="none" stroke="#3a6cb0" stroke-width="1.2"/></svg></div><div class="c w12 num">0</div><div class="c w13 num">361.13</div><div class="c w14 num">12</div><div class="c w15 num">0</div><div class="c w16 num">12</div><div class="c w17 num"></div>
</div>
<div class="row" style="top:404px">
<div class="c w1">13</div><div class="c w2"><i class="cb"></i></div><div class="c w3 ctr lk">生成拣货单</div>
<div class="c w4 dt">2021-07-12</div><div class="c w5 lnk">XSDD-20210712-007</div><div class="c w6"><div class="tag"><svg width="79" height="17" viewBox="0 0 79 17"><path d="M8 0 H79 V17 H8 L0 9 Z" fill="#4ebbe6"/><circle cx="8.7" cy="8.7" r="2" fill="#fff"/></svg><span>待拣货</span></div></div>
<div class="c w7">未完成</div><div class="c w8">zyy仓库</div><div class="c w9"></div><div class="c w10">信用额度测试</div>
<div class="c w11"><svg class="abs" style="left:5px;top:11px" width="7" height="12" viewBox="0 0 7 12"><path d="M3.5 11.5 V1 M1 3.3 L3.5 0.7 L6 3.3" fill="none" stroke="#3a6cb0" stroke-width="1.2"/></svg></div><div class="c w12 num">0</div><div class="c w13 num">3,833.24</div><div class="c w14 num">61</div><div class="c w15 num">0</div><div class="c w16 num">61</div><div class="c w17 num"></div>
</div>
<div class="row ev" style="top:435px">
<div class="c w1">14</div><div class="c w2"><i class="cb"></i></div><div class="c w3 ctr lk">生成拣货单</div>
<div class="c w4 dt">2021-07-14</div><div class="c w5 lnk">XSDD-20210714-001</div><div class="c w6"><div class="tag"><svg width="79" height="17" viewBox="0 0 79 17"><path d="M8 0 H79 V17 H8 L0 9 Z" fill="#4ebbe6"/><circle cx="8.7" cy="8.7" r="2" fill="#fff"/></svg><span>待拣货</span></div></div>
<div class="c w7">未完成</div><div class="c w8">默认仓库</div><div class="c w9"></div><div class="c w10">阿市地税局</div>
<div class="c w11"><svg class="abs" style="left:5px;top:11px" width="7" height="12" viewBox="0 0 7 12"><path d="M3.5 11.5 V1 M1 3.3 L3.5 0.7 L6 3.3" fill="none" stroke="#3a6cb0" stroke-width="1.2"/></svg></div><div class="c w12 num">0</div><div class="c w13 num">24.86</div><div class="c w14 num">2</div><div class="c w15 num">0</div><div class="c w16 num">2</div><div class="c w17 num"></div>
</div>
<div class="row" style="top:466px">
<div class="c w1">15</div><div class="c w2"><i class="cb"></i></div><div class="c w3 ctr lk">生成拣货单</div>
<div class="c w4 dt">2021-07-14</div><div class="c w5 lnk">XSDD-20210714-004</div><div class="c w6"><div class="tag"><svg width="79" height="17" viewBox="0 0 79 17"><path d="M8 0 H79 V17 H8 L0 9 Z" fill="#4ebbe6"/><circle cx="8.7" cy="8.7" r="2" fill="#fff"/></svg><span>待拣货</span></div></div>
<div class="c w7">已完成</div><div class="c w8">默认仓库</div><div class="c w9"></div><div class="c w10">线下优惠券领取</div>
<div class="c w11"><svg class="abs" style="left:5px;top:11px" width="7" height="12" viewBox="0 0 7 12"><path d="M3.5 11.5 V1 M1 3.3 L3.5 0.7 L6 3.3" fill="none" stroke="#3a6cb0" stroke-width="1.2"/></svg></div><div class="c w12 num">0</div><div class="c w13 num">29.83</div><div class="c w14 num">1</div><div class="c w15 num">0</div><div class="c w16 num">1</div><div class="c w17 num"></div>
</div>
<div class="row ev" style="top:497px">
<div class="c w1">16</div><div class="c w2"><i class="cb"></i></div><div class="c w3 ctr lk">生成拣货单</div>
<div class="c w4 dt">2021-07-14</div><div class="c w5 lnk">XSDD-20210714-005</div><div class="c w6"><div class="tag"><svg width="79" height="17" viewBox="0 0 79 17"><path d="M8 0 H79 V17 H8 L0 9 Z" fill="#4ebbe6"/><circle cx="8.7" cy="8.7" r="2" fill="#fff"/></svg><span>待拣货</span></div></div>
<div class="c w7">已完成</div><div class="c w8">zyy仓库</div><div class="c w9"></div><div class="c w10">张琴琴1</div>
<div class="c w11"><svg class="abs" style="left:5px;top:11px" width="7" height="12" viewBox="0 0 7 12"><path d="M3.5 11.5 V1 M1 3.3 L3.5 0.7 L6 3.3" fill="none" stroke="#3a6cb0" stroke-width="1.2"/></svg></div><div class="c w12 num">0</div><div class="c w13 num">113.00</div><div class="c w14 num">1</div><div class="c w15 num">0</div><div class="c w16 num">1</div><div class="c w17 num"></div>
</div>
<div class="row" style="top:528px">
<div class="c w1">17</div><div class="c w2"><i class="cb"></i></div><div class="c w3 ctr lk">生成拣货单</div>
<div class="c w4 dt">2021-07-14</div><div class="c w5 lnk">XSDD-20210714-006</div><div class="c w6"><div class="tag"><svg width="79" height="17" viewBox="0 0 79 17"><path d="M8 0 H79 V17 H8 L0 9 Z" fill="#4ebbe6"/><circle cx="8.7" cy="8.7" r="2" fill="#fff"/></svg><span>待拣货</span></div></div>
<div class="c w7">已完成</div><div class="c w8">默认仓库</div><div class="c w9"></div><div class="c w10">张海明</div>
<div class="c w11"><svg class="abs" style="left:5px;top:11px" width="7" height="12" viewBox="0 0 7 12"><path d="M3.5 11.5 V1 M1 3.3 L3.5 0.7 L6 3.3" fill="none" stroke="#3a6cb0" stroke-width="1.2"/></svg></div><div class="c w12 num">0</div><div class="c w13 num">29.83</div><div class="c w14 num">1</div><div class="c w15 num">0</div><div class="c w16 num">1</div><div class="c w17 num"></div>
</div>
<div class="row ev" style="top:559px">
<div class="c w1">18</div><div class="c w2"><i class="cb"></i></div><div class="c w3 ctr lk">生成拣货单</div>
<div class="c w4 dt">2021-07-19</div><div class="c w5 lnk">XSDD-20210719-011</div><div class="c w6"><div class="tag"><svg width="79" height="17" viewBox="0 0 79 17"><path d="M8 0 H79 V17 H8 L0 9 Z" fill="#4ebbe6"/><circle cx="8.7" cy="8.7" r="2" fill="#fff"/></svg><span>待拣货</span></div></div>
<div class="c w7">已完成</div><div class="c w8">默认仓库</div><div class="c w9">a1</div><div class="c w10">夏米的王甜甜</div>
<div class="c w11"><svg class="abs" style="left:5px;top:11px" width="7" height="12" viewBox="0 0 7 12"><path d="M3.5 11.5 V1 M1 3.3 L3.5 0.7 L6 3.3" fill="none" stroke="#3a6cb0" stroke-width="1.2"/></svg></div><div class="c w12 num">0</div><div class="c w13 num">0.01</div><div class="c w14 num">1</div><div class="c w15 num">0</div><div class="c w16 num">1</div><div class="c w17 num"></div>
</div>
<div class="abs" style="left:0;top:590px;width:1763px;height:19px;background:#f0f0f0;border-bottom:1px solid #d8dce4"></div>
<svg class="abs" style="left:589px;top:595px" width="5" height="9" viewBox="0 0 5 9"><path d="M5 0 V9 L0 4.5 Z" fill="#555"/></svg>
<div class="abs" style="left:600px;top:593px;width:521px;height:13px;background:#c1c1c1"></div>
<svg class="abs" style="left:1734px;top:595px" width="5" height="9" viewBox="0 0 5 9"><path d="M0 0 V9 L5 4.5 Z" fill="#555"/></svg>
<div class="row ev" style="top:609px;width:1763px;border-bottom:none;height:31px;background:#f5f5f5">
<div class="c w1" style="height:31px"><b>合计</b></div>
<div class="c w2" style="height:31px"></div>
<div class="c w3" style="height:31px"></div>
<div class="c w4" style="height:31px"></div>
<div class="c w5" style="height:31px"></div>
<div class="c w6" style="height:31px"></div>
<div class="c w7" style="height:31px"></div>
<div class="c w8" style="height:31px"></div>
<div class="c w9" style="height:31px"></div>
<div class="c w10" style="height:31px"></div>
<div class="c w11" style="height:31px"></div>
<div class="c w12" style="height:31px"></div>
<div class="c w13 tot" style="height:31px">7,419,634,597.53</div>
<div class="c w14 tot num" style="height:31px">4,597</div>
<div class="c w15 tot num" style="height:31px">0</div>
<div class="c w16 tot num" style="height:31px">5,013</div>
<div class="c w17" style="height:31px"></div>
</div>
<div class="abs" style="left:1746px;top:32px;width:17px;height:558px;background:#f1f1f1"></div>
<svg class="abs" style="left:1751px;top:38px" width="7" height="4" viewBox="0 0 7 4"><path d="M0 4 H7 L3.5 0 Z" fill="#a3a3a3"/></svg>
<div class="abs" style="left:1748px;top:49px;width:13px;height:473px;background:#c1c1c1"></div>
<svg class="abs" style="left:1751px;top:580px" width="7" height="4" viewBox="0 0 7 4"><path d="M0 0 H7 L3.5 4 Z" fill="#505050"/></svg>
</div>
<!-- pager -->
<div class="pg pgb" style="left:674px;width:45px;color:#888">首页</div>
<div class="pg pgb" style="left:724px;width:55px;color:#888;padding-left:12px">上页</div>
<svg class="abs" style="left:733px;top:901px" width="5" height="9" viewBox="0 0 5 9"><path d="M5 0 V9 L0 4.5 Z" fill="#777"/></svg>
<div class="pg" style="left:790px;top:894px">第 <span style="color:#6c8fd0;letter-spacing:0.4px;margin:0 1px">(1/5)</span> 页</div>
<div class="pg pgb" style="left:862px;width:55px;padding-right:12px">下页</div>
<svg class="abs" style="left:903px;top:901px" width="5" height="9" viewBox="0 0 5 9"><path d="M0 0 V9 L5 4.5 Z" fill="#5b86c8"/></svg>
<div class="pg pgb" style="left:922px;width:45px">尾页</div>
<div class="pg" style="left:1009px;top:894px">跳转到</div>
<div class="pg" style="left:1049px;top:896px;width:24px;height:19px;border:1px solid #999;border-radius:2px;line-height:17px;padding-left:2px;color:#000;font-size:13px">1</div>
<div class="pg" style="left:1077px;top:894px">页</div>
<div class="pg" style="left:1095px;top:895px;width:36px;height:20px;border-radius:5px;background:#55708f;color:#fff;text-align:center;line-height:22px;overflow:hidden">跳转</div>
<div class="pg" style="left:1179px;top:894px">共 <span style="color:#6c8fd0;letter-spacing:0.5px;margin:0 1px">84</span> 条记录</div>
<div class="pg" style="left:1261px;top:894px">每页显示</div>
<div class="pg" style="left:1313px;top:896px;width:24px;height:19px;border:1px solid #999;border-radius:2px;line-height:17px;padding-left:2px;color:#6c8fd0;font-size:13px">20</div>
<div class="pg" style="left:1341px;top:894px">行</div>

<!-- right thermometer -->
<div class="abs" style="left:1911px;top:766px;width:6px;height:48px;border-radius:3px;background:#6a7889;border:1px solid #414c5c"></div>
<div class="abs" style="left:1913px;top:793px;width:2px;height:20px;background:#37a8e6"></div>
<div class="abs" style="left:1908px;top:809px;width:12px;height:12px;border-radius:6px;background:#37a8e6;border:1px solid #414c5c"></div>

<!-- watermark -->
<div class="abs" style="left:1568px;top:860px;font-size:37px;line-height:44px;color:#fff;white-space:nowrap;text-shadow:1.5px 1.5px 0 #000, 1px 1px 0 #000, 2px 2px 1px #000;letter-spacing:0.7px">搜狐号@来肯云商</div>
</body>
</html>
